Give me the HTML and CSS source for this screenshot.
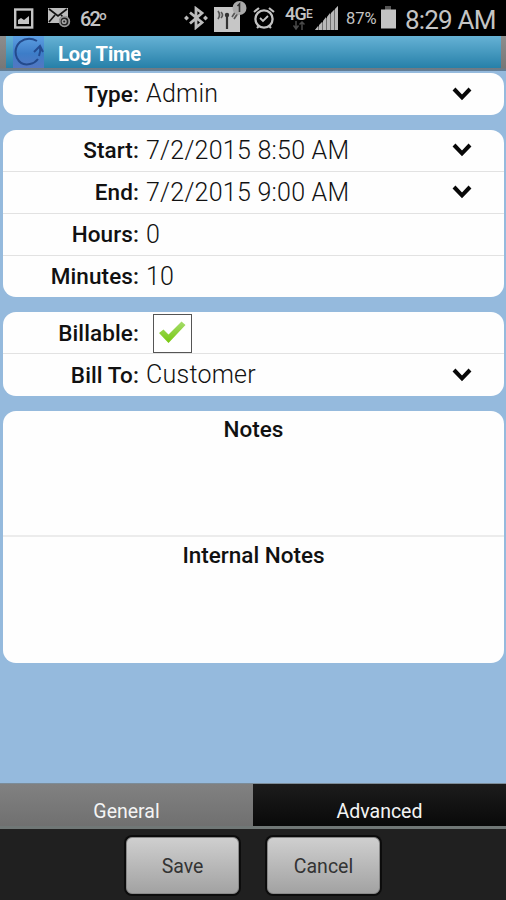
FILE: index.html
```html
<!DOCTYPE html>
<html lang="en">
<head>
    <meta charset="UTF-8">
    <meta name="viewport" content="width=device-width, initial-scale=1.0">
    <title>Log Time</title>
    <link rel="stylesheet" href="styles.css">
</head>
<body>
    <div class="status-bar">
        <svg class="icon-picture" width="20" height="22" viewBox="0 0 20 22">
            <rect x="1.2" y="1.5" width="17" height="18" fill="none" stroke="#c4c4c4" stroke-width="2.4"/>
            <path d="M4 16v-4l3-2 3 2 5-4v8z" fill="#c4c4c4"/>
        </svg>
        <svg class="icon-mail" width="23" height="20" viewBox="0 0 23 20">
            <path d="M0 0h20v9h-6l-3 6H0z" fill="#bdbdbd"/>
            <path d="M1 1l9 7 9-7M1 14l6-7M13 7l4 4" fill="none" stroke="#111" stroke-width="1.7"/>
            <circle cx="16.5" cy="13.5" r="5.5" fill="#222"/>
            <circle cx="16.5" cy="13.5" r="4.8" fill="none" stroke="#999" stroke-width="1.8"/>
            <circle cx="16.2" cy="13.5" r="1.8" fill="none" stroke="#a5a5a5" stroke-width="1.5"/>
        </svg>
        <span class="temperature">62<span class="degree">o</span></span>
        <svg class="icon-bluetooth" width="24" height="24" viewBox="0 0 24 24">
            <path d="M6 6.5l12 10-6 5V2.5l6 4.500L6 17.5" fill="none" stroke="#bcbcbc" stroke-width="2.8"/>
            <path d="M0 12l2.5-2.5L5 12l-2.5 2.5zM19 12l2.5-2.5L24 12l-2.5 2.5z" fill="#bcbcbc"/>
        </svg>
        <svg class="icon-wifi" width="33" height="33" viewBox="0 0 33 33">
            <rect x="0" y="6" width="26" height="25" fill="#c6c6c6"/>
            <path d="M13 28V15" stroke="#333" stroke-width="2.2"/>
            <circle cx="13" cy="14" r="2.2" fill="#333"/>
            <path d="M4 10q3 4 0 8M7 11q3 3 0 6M18 16l4-6M20 18l4-6" fill="none" stroke="#555" stroke-width="1.7"/>
            <circle cx="25.5" cy="7" r="7" fill="#aaa"/>
            <path d="M23.5 5l2-2v8" fill="none" stroke="#333" stroke-width="1.6"/>
        </svg>
        <svg class="icon-alarm" width="22" height="23" viewBox="0 0 22 23">
            <circle cx="11" cy="12" r="8.6" fill="none" stroke="#c2c2c2" stroke-width="2.3"/>
            <path d="M1 5l5-4M16 1l5 4M4 21l2-2M18 21l-2-2" stroke="#c2c2c2" stroke-width="2.2"/>
            <path d="M7 11l3 3 5-5" fill="none" stroke="#c2c2c2" stroke-width="1.8"/>
        </svg>
        <div class="network">
            <span class="network-name">4G<small>E</small></span>
            <svg width="12" height="9" viewBox="0 0 12 9">
                <path d="M3 0v7M0.5 4.5L3 8l2.5-3.5M9 9V1M6.5 3.5L9 1l2.5 2.5" fill="none" stroke="#4a4a4a" stroke-width="1.5"/>
            </svg>
        </div>
        <svg class="icon-signal" width="24" height="25" viewBox="0 0 24 25">
            <path d="M0 24h3v-4zM4 24h3v-8l-3 3zM8 24h3V11l-3 4zM12 24h3V7l-3 4zM16 24h3V4l-3 3zM20 24h3V0l-3 3z" fill="#b8b8b8"/>
            <path d="M0 24L23 0v24z" fill="#b8b8b8" opacity=".6"/>
        </svg>
        <span class="battery-level">87%</span>
        <svg class="icon-battery" width="15" height="23" viewBox="0 0 15 23">
            <rect x="4" y="0" width="6" height="4" fill="#555"/>
            <rect x="0" y="3.5" width="15" height="19" fill="#c4c4c4"/>
        </svg>
        <span class="clock">8:29 AM</span>
    </div>

    <div class="title-bar">
        <div class="title">
            <svg class="logo" width="31" height="32" viewBox="0 0 31 32">
                <defs>
                    <linearGradient id="logoBg" x1="0" y1="0" x2="0" y2="1">
                        <stop offset="0" stop-color="#5d9fe2"/>
                        <stop offset=".55" stop-color="#3d7dc8"/>
                        <stop offset="1" stop-color="#5377c2"/>
                    </linearGradient>
                </defs>
                <rect width="31" height="32" fill="url(#logoBg)"/>
                <path d="M24 5Q15 0 7 6Q0 13 4 22Q8 30 17 28Q22 27 25 23" fill="none" stroke="#234a8c" stroke-width="2"/>
                <path d="M26 20q2-5 1-9M21 16l6-6 3 6" fill="none" stroke="#244c91" stroke-width="2"/>
            </svg>
            <h1>Log Time</h1>
        </div>
    </div>

    <main class="form">
        <section class="card">
            <div class="row">
                <span class="label">Type:</span>
                <span class="value">Admin</span>
                <svg class="arrow" width="20" height="14" viewBox="0 0 20 14"><path d="M2 2L10 10.3 18 2"/></svg>
            </div>
        </section>

        <section class="card">
            <div class="row">
                <span class="label">Start:</span>
                <span class="value">7/2/2015 8:50 AM</span>
                <svg class="arrow" width="20" height="14" viewBox="0 0 20 14"><path d="M2 2L10 10.3 18 2"/></svg>
            </div>
            <div class="row">
                <span class="label">End:</span>
                <span class="value">7/2/2015 9:00 AM</span>
                <svg class="arrow" width="20" height="14" viewBox="0 0 20 14"><path d="M2 2L10 10.3 18 2"/></svg>
            </div>
            <div class="row">
                <span class="label">Hours:</span>
                <span class="value">0</span>
            </div>
            <div class="row">
                <span class="label">Minutes:</span>
                <span class="value">10</span>
            </div>
        </section>

        <section class="card">
            <div class="row">
                <span class="label">Billable:</span>
                <span class="checkbox">
                    <svg width="27" height="23" viewBox="0 0 27 23">
                        <defs>
                            <linearGradient id="tick" x1="0" y1="0" x2="0" y2="1">
                                <stop offset="0" stop-color="#a5dc6c"/>
                                <stop offset="1" stop-color="#77c80e"/>
                            </linearGradient>
                        </defs>
                        <path d="M0 12l4.5-3.5 5 5L22.5 0.5l4 3.5L9.5 22z" fill="url(#tick)"/>
                    </svg>
                </span>
            </div>
            <div class="row">
                <span class="label">Bill To:</span>
                <span class="value">Customer</span>
                <svg class="arrow" width="20" height="14" viewBox="0 0 20 14"><path d="M2 2L10 10.3 18 2"/></svg>
            </div>
        </section>

        <section class="card">
            <div class="notes">Notes</div>
            <div class="notes">Internal Notes</div>
        </section>
    </main>

    <nav class="tabs">
        <div class="tab active">General</div>
        <div class="tab">Advanced</div>
    </nav>

    <footer class="footer">
        <button class="button">Save</button>
        <button class="button">Cancel</button>
    </footer>
</body>
</html>
```

FILE: styles.css
```css
* {
    box-sizing: border-box;
}

body {
    margin: 0;
    height: 900px;
    display: flex;
    flex-direction: column;
    overflow: hidden;
    font-family: Roboto, "Liberation Sans", sans-serif;
    background-color: #95badd;
    color: #111;
}

.status-bar {
    display: flex;
    align-items: flex-start;
    height: 36px;
    background-color: #000;
    color: #c4c4c4;
    line-height: 1;
    white-space: nowrap;
}

.status-bar > * {
    flex: none;
}

.icon-picture {
    margin: 8px 0 0 14px;
}

.icon-mail {
    margin: 8px 0 0 14px;
}

.temperature {
    display: flex;
    width: 26px;
    margin: 9px 0 0 9px;
    font-size: 20px;
    font-weight: 500;
    letter-spacing: -1.8px;
}

.degree {
    font-size: 13px;
}

.icon-bluetooth {
    margin: 6px 0 0 78px;
}

.icon-wifi {
    margin: 1px 0 0 6px;
}

.icon-alarm {
    margin: 7px 0 0 6px;
}

.network {
    display: flex;
    flex-direction: column;
    align-items: center;
    width: 27px;
    margin: 7px 0 0 10px;
}

.network-name {
    height: 14px;
    font-size: 18px;
    line-height: 14px;
    font-weight: 500;
    letter-spacing: -0.7px;
}

.network-name small {
    font-size: 12px;
    vertical-align: 2px;
}

.icon-signal {
    margin: 6px 0 0 3px;
}

.battery-level {
    width: 32px;
    margin: 11px 0 0 7px;
    font-size: 16.5px;
}

.icon-battery {
    margin: 6px 0 0 3px;
}

.clock {
    margin: 7px 0 0 9px;
    font-size: 26px;
    letter-spacing: -0.8px;
}

.title-bar {
    height: 35px;
    padding: 0 5px 3px 6px;
    background: linear-gradient(#8d8d8d, #777 90%, #5f7f9b);
}

.title {
    display: flex;
    align-items: center;
    height: 32px;
    padding-left: 7px;
    background: linear-gradient(#66b2d5, #2680a9);
}

.title h1 {
    margin: 3px 0 0 14px;
    font-size: 20px;
    line-height: 32px;
    font-weight: 700;
    letter-spacing: -0.1px;
    color: #fff;
}

.form {
    flex: 1;
    display: flex;
    flex-direction: column;
    gap: 15px;
    padding: 2px 2px 0 3px;
}

.card {
    border-radius: 13px;
    background-color: #fefefe;
    overflow: hidden;
}

.row {
    display: flex;
    align-items: center;
    height: 42px;
    padding-right: 32px;
}

/* the divider is part of the row above it */
.row:not(:last-child) {
    height: 42px;
    border-bottom: 1px solid #e2e2e2;
}

.row:last-child {
    height: 41.5px;
}

.label {
    width: 136px;
    text-align: right;
    font-size: 22.5px;
    font-weight: 500;
    letter-spacing: 0.1px;
}

.value {
    flex: 1;
    margin-left: 7px;
    font-size: 25px;
    font-weight: 300;
    letter-spacing: 0.25px;
}

.arrow {
    fill: none;
    stroke: #080808;
    stroke-width: 4;
}

.checkbox {
    display: flex;
    align-items: center;
    justify-content: center;
    width: 39px;
    height: 39px;
    margin: 2px 0 0 14px;
    padding-bottom: 3px;
    border: 1.5px solid #555;
    background-color: #fff;
}

.notes {
    height: 126px;
    padding-top: 5px;
    text-align: center;
    font-size: 22.5px;
    font-weight: 500;
}

.notes:first-child {
    border-bottom: 2px solid #ececec;
}

.tabs {
    display: flex;
    height: 46px;
    border-top: 1px solid #7c8c98;
    border-bottom: 3px solid #707776;
    background-color: #111;
}

.tab {
    flex: 1;
    padding-top: 15px;
    text-align: center;
    font-size: 19.5px;
    line-height: 26px;
    color: #f4f4f4;
    background: linear-gradient(#1c1c1c, #090909);
}

.tab.active {
    background: linear-gradient(#818181, #707070);
}

.footer {
    display: flex;
    justify-content: center;
    gap: 28px;
    height: 71px;
    padding-top: 8px;
    background-color: #202020;
}

.button {
    width: 113px;
    height: 57px;
    padding: 2px 0 0;
    border: 1px solid #888;
    border-radius: 6px;
    background: linear-gradient(#cfcfcf, #a2a2a2);
    box-shadow: 0 0 0 2px #0c0c0c;
    font-family: inherit;
    font-size: 19.5px;
    color: #333;
}
```
